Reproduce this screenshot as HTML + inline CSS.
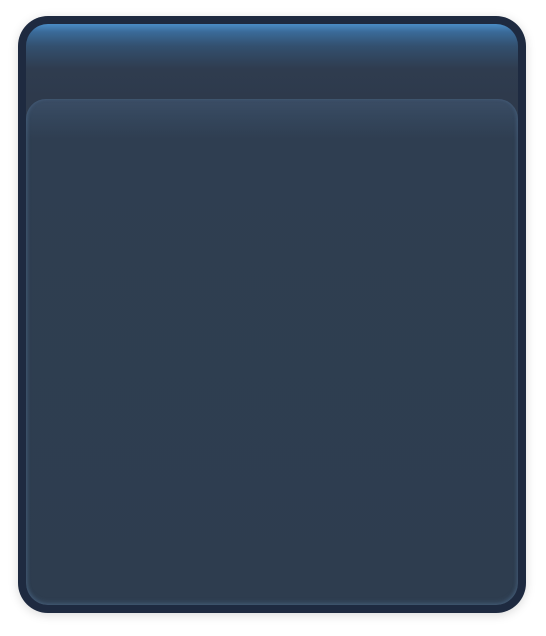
<!DOCTYPE html>
<html><head><style>
html,body{margin:0;padding:0;width:546px;height:636px;background:#fff;overflow:hidden}
.outer{position:absolute;left:18px;top:16px;width:508px;height:597px;box-sizing:border-box;background:#1e2a40;border-radius:30px;box-shadow:0 2px 10px rgba(0,0,0,0.15)}
.inner{position:absolute;left:8px;top:8px;right:8px;bottom:8px;border-radius:22px;overflow:hidden;
background:linear-gradient(to bottom,#4a8cc6 0px,#3a6a98 8px,#33506f 22px,#2f3c4f 45px,#2e3a4c 75px);}
.panel{position:absolute;left:0;right:0;top:75px;bottom:0;border-radius:20px 20px 22px 22px;
background:linear-gradient(to bottom,#3b4d65 0px,#34465c 18px,#2f3e51 40px,#2e3d4f 100%);
box-shadow:inset 2px 0 3px rgba(80,110,140,0.35),inset -2px 0 3px rgba(80,110,140,0.35),inset 0 -3px 4px rgba(80,110,140,0.35)}
</style></head><body>
<div class="outer"><div class="inner"><div class="panel"></div></div></div>
</body></html>
